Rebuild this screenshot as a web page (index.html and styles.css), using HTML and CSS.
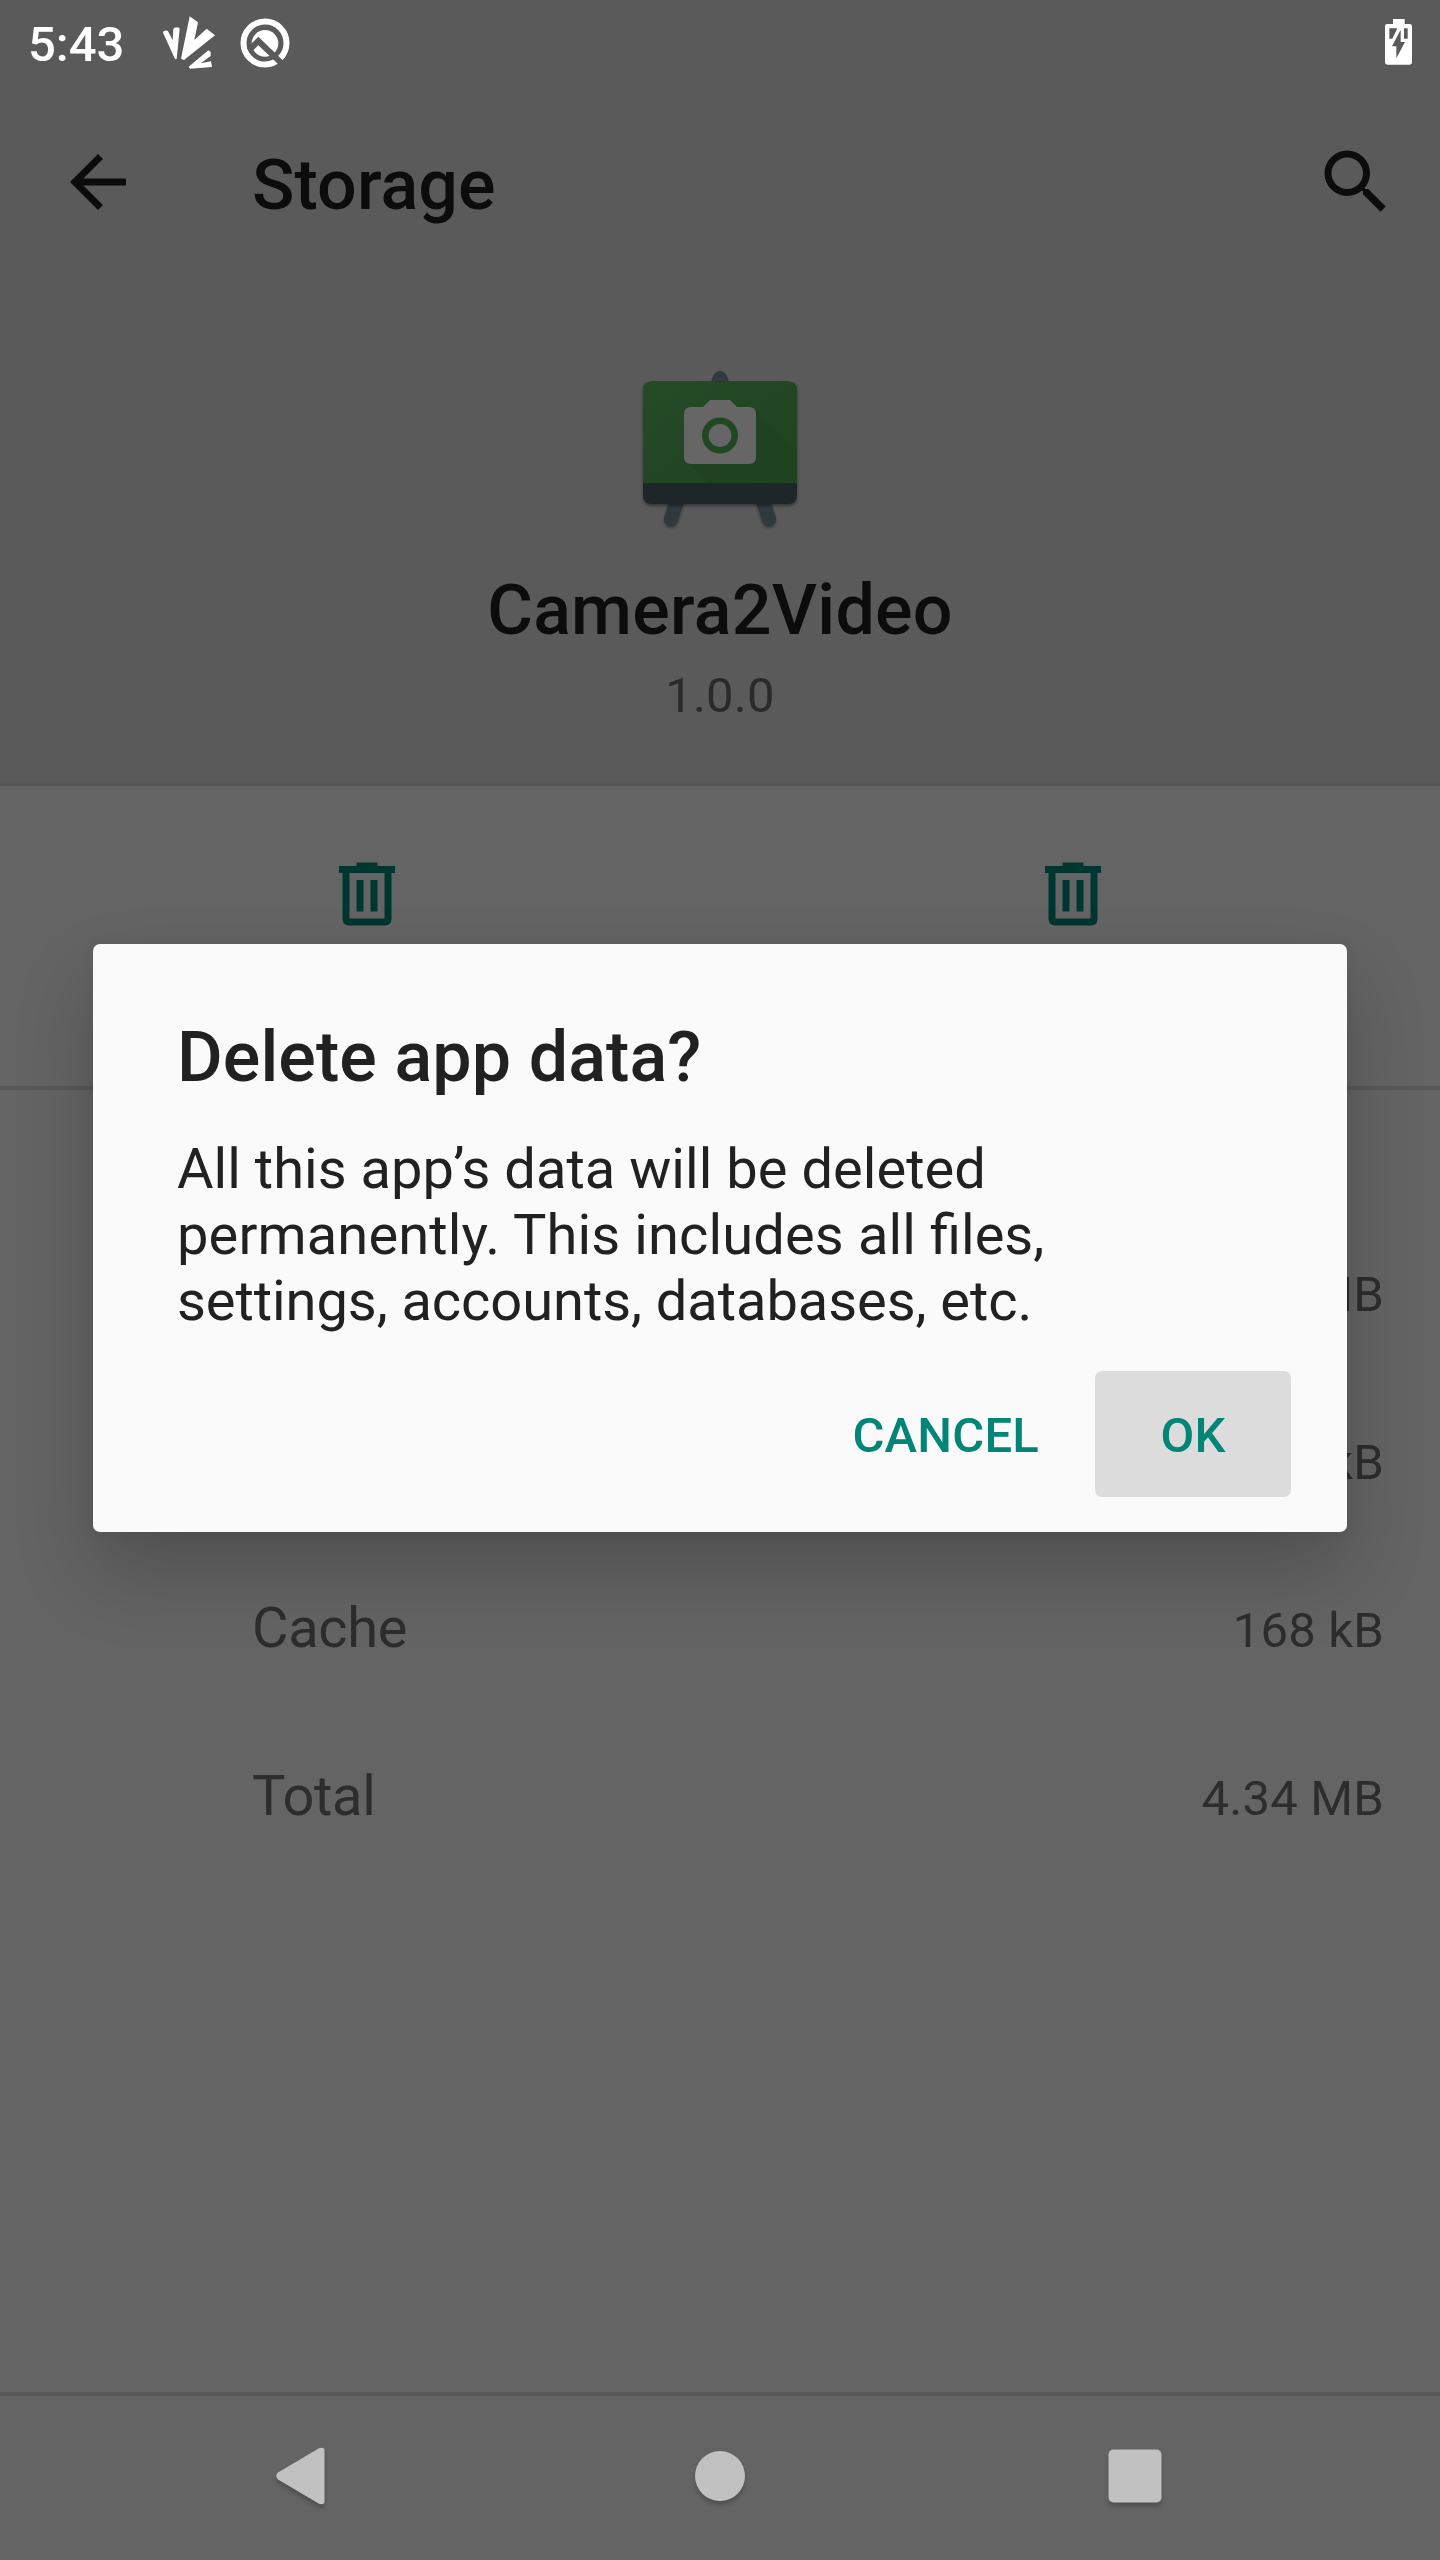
FILE: index.html
```html
<!DOCTYPE html>
<html lang="en">
<head>
<meta charset="utf-8">
<title>Storage</title>
<link rel="stylesheet" href="styles.css">
</head>
<body>
<div class="screen">
  <header class="header">
    <div class="status-bar">
      <span class="clock">5:43</span>
      <svg class="status-icon" viewBox="486 48 162 162"><path d="M489 98Q489 92 495 92Q502 90 505 95L518 121L520 88Q521 82 531 82Q539 82 539 87L530 177H525ZM569 49L594 67L583 120L620 86L645 106L552 180L543 176ZM625 151L632 156V168L602 190L633 184L636 201L570 206L566 200Z"/></svg>
      <svg class="status-icon q-icon" viewBox="715 45 162 162">
        <mask id="band"><path fill="#fff" d="M715 45H877V207H715Z"/><path fill="none" stroke="#000" stroke-width="18" d="M748 148L776 120L850 191"/></mask>
        <g mask="url(#band)"><circle cx="796" cy="127" r="40"/><circle cx="796" cy="126" r="64.500" fill="none" stroke="#fff" stroke-width="18"/></g>
      </svg>
      <svg class="battery-icon" viewBox="375 57 81 138"><path fill-rule="evenodd" d="M399 57H434V72H449Q456 72 456 79V187Q456 194 449 194H382Q375 194 375 187V79Q375 72 382 72H399ZM388 85V116H397L412 85ZM432 85V116H443V85ZM422 89L396 139H409V175L435 126H422Z"/></svg>
    </div>
    <div class="app-bar">
      <svg class="icon" viewBox="0 0 24 24"><path d="M20 11H7.830l5.590-5.590L12 4l-8 8 8 8 1.410-1.410L7.830 13H20z"/></svg>
      <h1 class="title">Storage</h1>
      <svg class="icon" viewBox="0 0 24 24"><path d="M15.500 14h-.79l-.28-.27A6.470 6.470 0 0 0 16 9.500 6.500 6.500 0 1 0 9.500 16c1.610 0 3.090-.59 4.230-1.570l.27.28v.79l5 4.990L20.490 19l-4.990-5zm-6 0C7.010 14 5 11.990 5 9.500S7.010 5 9.500 5 14 7.010 14 9.500 11.990 14 9.500 14z"/></svg>
    </div>
    <svg class="app-icon" viewBox="0 0 160 160">
      <defs>
        <linearGradient id="board" x2="1" y2="1"><stop stop-color="#264b27"/><stop offset=".55" stop-color="#224623"/><stop offset="1" stop-color="#214522"/></linearGradient>
        <linearGradient id="cast" x2="1" y2="1"><stop stop-color="#1e401f"/><stop offset="1" stop-color="#214522"/></linearGradient>
        <filter id="soft" filterUnits="userSpaceOnUse" x="-10" y="-10" width="180" height="190" color-interpolation-filters="sRGB"><feDropShadow dx="0" dy="2" stdDeviation="1.500" flood-opacity=".4"/></filter>
        <clipPath id="green"><path d="M3 119V26.500Q3 17.500 12 17.500H148Q157 17.500 157 26.500V119Z"/></clipPath>
      </defs>
      <path filter="url(#soft)" fill="none" stroke="#2f393e" stroke-width="14" stroke-linecap="round" d="M38 133L31 155M122 133L129 155"/>
      <path fill="#30393f" d="M71 19Q73 7 80 7T89 19Z"/>
      <path filter="url(#soft)" fill="#1e2629" d="M3 26.500Q3 17.500 12 17.500H148Q157 17.500 157 26.500V131Q157 140 148 140H12Q3 140 3 131Z"/>
      <g clip-path="url(#green)">
        <path fill="url(#board)" d="M3 17H157V119H3Z"/>
        <path fill="url(#cast)" d="M46 97L114 45L188 119V160H109Z"/>
      </g>
      <path fill="#666" d="M51 43H63L70 36H90L97 43H109Q116 43 116 50V93Q116 100 109 100H51Q44 100 44 93V50Q44 43 51 43Z"/>
      <circle cx="80" cy="71.500" r="14.700" fill="none" stroke="#214723" stroke-width="6.600"/>
    </svg>
    <h2 class="app-name">Camera2Video</h2>
    <p class="version">1.0.0</p>
  </header>

  <section class="actions">
    <svg class="trash" viewBox="0 0 24 24"><path fill-rule="evenodd" d="M9 3H15V4H20V6H19V19Q19 21 17 21H7Q5 21 5 19V6H4V4H9ZM7 6V19H17V6ZM9 8H11V17H9ZM13 8H15V17H13Z"/></svg>
    <svg class="trash" viewBox="0 0 24 24"><path fill-rule="evenodd" d="M9 3H15V4H20V6H19V19Q19 21 17 21H7Q5 21 5 19V6H4V4H9ZM7 6V19H17V6ZM9 8H11V17H9ZM13 8H15V17H13Z"/></svg>
  </section>

  <section class="sizes">
    <div class="row"><span class="value">MB</span></div>
    <div class="row"><span class="value">kB</span></div>
    <div class="row"><span class="label">Cache</span><span class="value">168 kB</span></div>
    <div class="row"><span class="label">Total</span><span class="value">4.34 MB</span></div>
  </section>

  <nav class="nav-bar">
    <svg class="nav-icon" viewBox="0 0 84 84"><path d="M19 38.500Q15.500 42 19 45.500L60 69.800Q65.500 71.500 65.500 67V17Q65.500 12.500 60 14.200Z"/></svg>
    <svg class="nav-icon" viewBox="0 0 84 84"><circle cx="44" cy="42" r="25"/></svg>
    <svg class="nav-icon" viewBox="0 0 84 84"><rect x="15.500" y="15.500" width="53" height="53" rx="5"/></svg>
  </nav>

  <div class="dialog" role="dialog">
    <h2 class="dialog-title">Delete app data?</h2>
    <p class="message">All this app’s data will be deleted <span class="loose">permanently. This includes all <span class="joined">files,</span></span> <span class="tight">settings, accounts, databases, etc.</span></p>
    <div class="buttons">
      <button class="button">CANCEL</button>
      <button class="button focused">OK</button>
    </div>
  </div>
</div>
</body>
</html>
```
FILE: styles.css
```css
* { box-sizing: border-box; margin: 0; padding: 0; }
body { font-family: Roboto, sans-serif; background: #646464; }
svg { display: block; flex: none; }

.screen {
  position: relative;
  width: 1440px;
  height: 2560px;
  display: flex;
  flex-direction: column;
  overflow: hidden;
  background: #646464;
}

.header {
  height: 786px;
  display: flex;
  flex-direction: column;
  align-items: center;
  background: #5a5a5a;
  border-bottom: 4px solid #575757;
}
.status-bar {
  width: 100%;
  height: 88px;
  padding: 0 28px;
  display: flex;
  align-items: center;
  color: #fff;
  fill: #fff;
}
.clock { font-size: 49px; font-weight: 500; line-height: 58px; width: 134px; padding-top: 2px; }
.status-icon { width: 54px; height: 54px; margin-top: -2px; }
.q-icon { margin-left: 22px; }
.battery-icon { width: 27px; height: 46px; margin-left: auto; margin-top: -4px; }

.app-bar {
  width: 100%;
  height: 188px;
  padding: 0 42px 0 56px;
  display: flex;
  align-items: center;
}
.icon { width: 84px; height: 84px; fill: #0c0c0c; }
.title { flex: 1; padding: 6px 0 0 112px; }
.title, .app-name, .dialog-title { font-size: 70px; font-weight: 500; line-height: 82px; color: #0c0c0c; letter-spacing: .1px; }
.app-name { letter-spacing: .25px; }
.app-icon { width: 160px; height: 160px; margin: 88px 0 45px; overflow: visible; }
.version { margin-top: 16px; font-size: 49px; line-height: 58px; letter-spacing: .2px; color: #2a2a2a; }

.actions {
  height: 304px;
  padding: 66px 14px 0;
  display: grid;
  grid-template-columns: 1fr 1fr;
  justify-items: center;
  border-bottom: 4px solid #57585a;
}
.trash { width: 84px; height: 84px; fill: #003630; }

.sizes { flex: 1; padding: 118px 56px 0 252px; }
.row { height: 168px; display: flex; align-items: center; color: #2d2d2d; }
.label { font-size: 56px; line-height: 66px; letter-spacing: -.3px; }
.value { margin-left: auto; padding-top: 6px; font-size: 49px; line-height: 58px; letter-spacing: .2px; }

.nav-bar {
  height: 168px;
  padding: 38px 263px 0 259px;
  display: flex;
  justify-content: space-between;
  border-top: 4px solid #595959;
  fill: #c1c1c1;
}
.nav-icon { width: 84px; height: 84px; filter: drop-shadow(0 4px 2px rgba(0, 0, 0, .2)); }

.dialog {
  position: absolute;
  left: 93px;
  top: 944px;
  width: 1254px;
  height: 588px;
  padding: 72px 56px 35px 84px;
  border-radius: 7px;
  background: #fafafa;
  box-shadow: 0 40px 80px rgba(0, 0, 0, .2), 0 0 14px rgba(0, 0, 0, .06);
}
.dialog-title { color: #212121; }
.message { width: 930px; margin-top: 38px; font-size: 56px; line-height: 66px; color: #212121; letter-spacing: .04px; }
.loose { letter-spacing: .13px; }
.joined { letter-spacing: normal; }
.tight { letter-spacing: -.06px; }
.buttons { display: flex; justify-content: flex-end; margin-top: 37px; }
.button {
  height: 126px;
  padding: 4px 56px 0;
  border: 0;
  border-radius: 7px;
  background: none;
  font: 500 49px/58px Roboto, sans-serif;
  letter-spacing: .2px;
  color: #008577;
}
.focused { width: 196px; background: #dcdcdc; }
```
